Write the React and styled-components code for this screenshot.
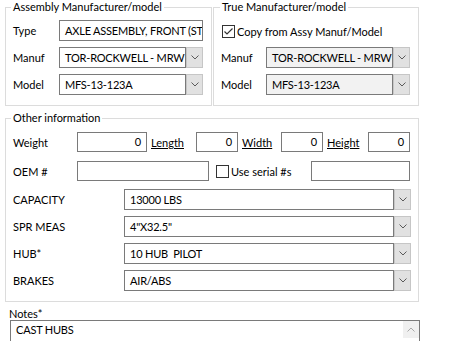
import styled, { createGlobalStyle } from 'styled-components';

const Global = createGlobalStyle`
  html, body { margin: 0; padding: 0; background: #fff; }
  body {
    font-family: Lato, "Liberation Sans", Arial, sans-serif;
    font-size: 11px;
    color: #000;
  }
`;

const Page = styled.div`
  width: 462px;
  height: 341px;
  overflow: hidden;
  padding-left: 5px;
  box-sizing: border-box;
`;

const TopRow = styled.div`
  display: flex;
  gap: 1px;
`;

const Group = styled.fieldset`
  margin: 0;
  padding: 0;
  border: 1px solid #dcdcdc;
  width: ${p => p.w}px;
  box-sizing: border-box;
  min-width: 0;
`;

const Legend = styled.legend`
  margin-left: ${p => p.indent}px;
  padding: 0 2px;
  line-height: 14px;
  height: 14px;
`;

const FieldGrid = styled.div`
  display: grid;
  grid-template-columns: ${p => p.labelW}px ${p => p.fieldW}px;
  row-gap: ${p => p.gap}px;
  align-items: center;
  padding: ${p => p.pad};
`;

const Label = styled.span`
  white-space: nowrap;
`;

const TextBox = styled.div`
  height: ${p => p.h || 21}px;
  width: ${p => (p.w ? p.w + 'px' : 'auto')};
  box-sizing: border-box;
  border: 1px solid #7a7a7a;
  background: #fff;
  padding: 0 ${p => (p.right ? 5 : 0)}px 0 5px;
  line-height: ${p => (p.h || 21) - 2}px;
  letter-spacing: -0.2px;
  white-space: nowrap;
  overflow: hidden;
  text-align: ${p => (p.right ? 'right' : 'left')};
  flex: none;
`;

const ComboWrap = styled.div`
  display: flex;
  height: 21px;
  width: ${p => (p.w ? p.w + 'px' : 'auto')};
`;

const ComboText = styled.div`
  flex: 1;
  min-width: 0;
  box-sizing: border-box;
  border: 1px solid #7a7a7a;
  background: ${p => (p.disabled ? '#f2f2f2' : '#fff')};
  padding-left: 5px;
  line-height: 19px;
  letter-spacing: -0.2px;
  white-space: pre;
  overflow: hidden;
`;

const ComboButton = styled.div`
  width: 17px;
  flex: none;
  box-sizing: border-box;
  border: 1px solid #c6c6c6;
  background: #e1e1e1;
  display: flex;
  align-items: center;
  justify-content: center;
`;

const Chevron = ({ up, color = '#5a5a5a' }) => (
  <svg width="8" height="5" viewBox="0 0 8 5">
    <polyline
      points={up ? '0.5,4.5 4,1 7.5,4.5' : '0.5,0.5 4,4 7.5,0.5'}
      fill="none"
      stroke={color}
      strokeWidth="1"
    />
  </svg>
);

function Combo({ value, disabled, w }) {
  return (
    <ComboWrap w={w}>
      <ComboText disabled={disabled}>{value}</ComboText>
      <ComboButton>
        <Chevron />
      </ComboButton>
    </ComboWrap>
  );
}

const CheckBox = styled.div`
  width: 13px;
  height: 13px;
  box-sizing: border-box;
  border: 1px solid #333;
  background: #fff;
  flex: none;
  display: flex;
  align-items: center;
  justify-content: center;
`;

function Check({ checked }) {
  return (
    <CheckBox>
      {checked && (
        <svg width="11" height="11" viewBox="0 0 11 11">
          <polyline points="1.5,5.5 4,8 9.5,2.5" fill="none" stroke="#333" strokeWidth="1.2" />
        </svg>
      )}
    </CheckBox>
  );
}

const CheckRow = styled.div`
  display: flex;
  align-items: center;
  gap: 2px;
  padding: ${p => p.pad || 0};
`;

const RightBody = styled.div`
  padding: 11px 0 0 7px;
`;

const OtherBody = styled.div`
  display: flex;
  flex-direction: column;
  padding: 7px 0 10px 7px;
`;

const Line = styled.div`
  display: flex;
  align-items: center;
  height: ${p => p.h}px;
  margin-top: ${p => p.mt || 0}px;
`;

const RowLabel = styled.span`
  width: ${p => p.w}px;
  margin-left: ${p => p.ml || 0}px;
  flex: none;
  white-space: nowrap;
  text-decoration: ${p => (p.u ? 'underline' : 'none')};
`;

const NotesLabel = styled.div`
  margin: 5px 0 0 4px;
  line-height: 14px;
  height: 13px;
`;

const NotesArea = styled.div`
  margin: 0 0 0 5px;
  width: 410px;
  height: 40px;
  box-sizing: border-box;
  border: 1px solid #7a7a7a;
  display: flex;
  justify-content: space-between;
  padding-left: 5px;
  line-height: 18px;
  letter-spacing: -0.2px;
`;

const ScrollUp = styled.div`
  width: 16px;
  height: 17px;
  background: #f0f0f0;
  display: flex;
  align-items: center;
  justify-content: center;
`;

const dropdowns = [
  ['CAPACITY', '13000 LBS'],
  ['SPR MEAS', '4"X32.5"'],
  ['HUB*', '10 HUB  PILOT'],
  ['BRAKES', 'AIR/ABS'],
];

export default function App() {
  return (
    <Page>
      <Global />
      <TopRow>
        <Group w={207}>
          <Legend indent={5}>Assembly Manufacturer/model</Legend>
          <FieldGrid labelW={46} fieldW={144} gap={6} pad="6px 0 10px 7px">
            <Label>Type</Label>
            <TextBox>AXLE ASSEMBLY, FRONT (STEER)</TextBox>
            <Label>Manuf</Label>
            <Combo value="TOR-ROCKWELL - MRW" />
            <Label>Model</Label>
            <Combo value="MFS-13-123A" />
          </FieldGrid>
        </Group>
        <Group w={206}>
          <Legend indent={6}>True Manufacturer/model</Legend>
          <RightBody>
            <CheckRow pad="0 0 0 1px">
              <Check checked />
              <span>Copy from Assy Manuf/Model</span>
            </CheckRow>
            <FieldGrid labelW={45} fieldW={144} gap={6} pad="9px 0 10px 0">
              <Label>Manuf</Label>
              <Combo value="TOR-ROCKWELL - MRW" disabled />
              <Label>Model</Label>
              <Combo value="MFS-13-123A" disabled />
            </FieldGrid>
          </RightBody>
        </Group>
      </TopRow>

      <Group w={414} style={{ marginTop: 5 }}>
        <Legend indent={5}>Other information</Legend>
        <OtherBody>
          <Line h={20}>
            <RowLabel w={64}>Weight</RowLabel>
            <TextBox h={20} w={70} right>0</TextBox>
            <RowLabel w={45} ml={4} u>Length</RowLabel>
            <TextBox h={20} w={42} right>0</TextBox>
            <RowLabel w={39} ml={4} u>Width</RowLabel>
            <TextBox h={20} w={42} right>0</TextBox>
            <RowLabel w={41} ml={4} u>Height</RowLabel>
            <TextBox h={20} w={42} right>0</TextBox>
          </Line>
          <Line h={20} mt={9}>
            <RowLabel w={64}>OEM #</RowLabel>
            <TextBox h={20} w={132} />
            <CheckRow pad="0 0 0 7px">
              <Check />
              <span>Use serial #s</span>
            </CheckRow>
            <TextBox h={20} w={99} style={{ marginLeft: 'auto', marginRight: 8 }} />
          </Line>
          {dropdowns.map(([label, value], i) => (
            <Line h={21} mt={i === 0 ? 8 : 6} key={label}>
              <RowLabel w={111}>{label}</RowLabel>
              <Combo value={value} w={287} />
            </Line>
          ))}
        </OtherBody>
      </Group>

      <NotesLabel>Notes*</NotesLabel>
      <NotesArea>
        <span>CAST HUBS</span>
        <ScrollUp>
          <Chevron up color="#a8a8a8" />
        </ScrollUp>
      </NotesArea>
    </Page>
  );
}
